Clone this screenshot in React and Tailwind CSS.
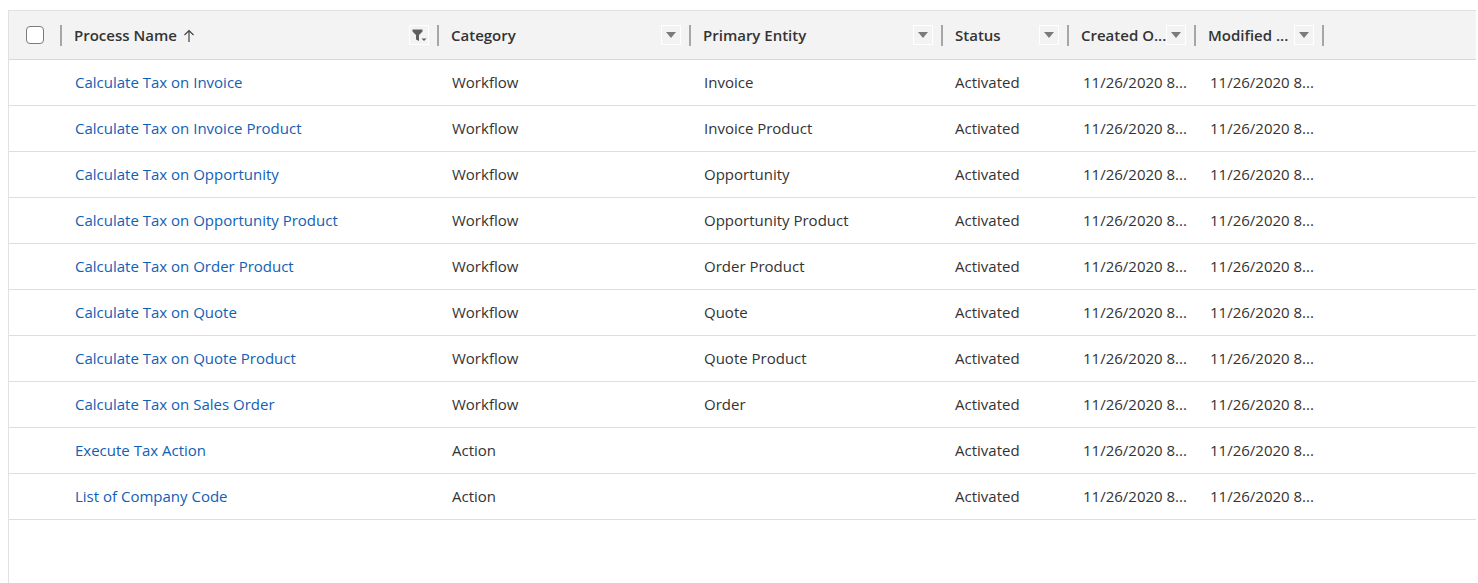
import { useState } from 'react'

// Colonne della griglia: larghezza in px misurata dal separatore al separatore successivo.
const COLONNE = [
  { chiave: 'nome', titolo: 'Process Name', larghezza: 'w-[377px]', ordinata: true, filtro: true },
  { chiave: 'categoria', titolo: 'Category', larghezza: 'w-[252px]' },
  { chiave: 'entita', titolo: 'Primary Entity', larghezza: 'w-[252px]' },
  { chiave: 'stato', titolo: 'Status', larghezza: 'w-[126px]' },
  { chiave: 'creato', titolo: 'Created O...', larghezza: 'w-[127px]' },
  { chiave: 'modificato', titolo: 'Modified ...', larghezza: 'w-[128px]' },
]

const DATA = '11/26/2020 8...'

const RIGHE = [
  ['Calculate Tax on Invoice', 'Workflow', 'Invoice'],
  ['Calculate Tax on Invoice Product', 'Workflow', 'Invoice Product'],
  ['Calculate Tax on Opportunity', 'Workflow', 'Opportunity'],
  ['Calculate Tax on Opportunity Product', 'Workflow', 'Opportunity Product'],
  ['Calculate Tax on Order Product', 'Workflow', 'Order Product'],
  ['Calculate Tax on Quote', 'Workflow', 'Quote'],
  ['Calculate Tax on Quote Product', 'Workflow', 'Quote Product'],
  ['Calculate Tax on Sales Order', 'Workflow', 'Order'],
  ['Execute Tax Action', 'Action', ''],
  ['List of Company Code', 'Action', ''],
]

function Separatore() {
  return <span className="w-[2px] h-[21px] bg-[#a6a6a6] shrink-0" />
}

function BottoneMenu({ filtro }) {
  return (
    <span className="w-[20px] h-[20px] border border-white flex items-center justify-center shrink-0">
      {filtro ? (
        <svg viewBox="0 0 16 16" width="16" height="16">
          <path d="M1.5 2.5h10v2l-3.5 3.5v6l-3-1.5V8L1.5 4.5z" fill="#5f5f5f" />
          <path d="M10.5 11.5h5l-2.5 2.5z" fill="#5f5f5f" />
        </svg>
      ) : (
        <svg viewBox="0 0 10 6" width="10" height="6">
          <path d="M0 0h10L5 6z" fill="#7a7a7a" />
        </svg>
      )}
    </span>
  )
}

function Intestazione({ col }) {
  return (
    <div className={`${col.larghezza} shrink-0 flex items-center h-full`}>
      <div className="flex-1 min-w-0 flex items-center pl-[12px] pr-[8px]">
        <span className="font-semibold text-[#333] whitespace-nowrap">{col.titolo}</span>
        {col.ordinata && (
          <svg viewBox="0 0 12 14" width="12" height="14" className="ml-[6px] mt-[1px]">
            <path d="M6 13V1.5M1.5 6 6 1.5 10.5 6" fill="none" stroke="#444" strokeWidth="1.2" />
          </svg>
        )}
        <span className="flex-1" />
        <BottoneMenu filtro={col.filtro} />
      </div>
      <Separatore />
    </div>
  )
}

export default function App() {
  const [selezionato, setSelezionato] = useState(false)

  return (
    <div
      className="min-h-[583px] bg-white pt-[10px] pl-[8px] pr-[2px] text-[15px]"
      style={{ fontFamily: '"Segoe UI", "Open Sans", sans-serif' }}
    >
      <div className="border-l border-t border-[#e1e1e1] min-h-[573px]">
        <div className="h-[49px] bg-[#f3f3f3] border-b border-[#d8d8d8] flex items-center">
          <div className="w-[53px] shrink-0 flex items-center h-full">
            <button
              type="button"
              onClick={() => setSelezionato(!selezionato)}
              className="ml-[17px] w-[18px] h-[18px] rounded-[4px] border-[1.5px] border-[#7c7c7c] bg-white"
              aria-label="Select all"
            />
            <span className="flex-1" />
            <Separatore />
          </div>
          {COLONNE.map((c) => (
            <Intestazione key={c.chiave} col={c} />
          ))}
        </div>

        {RIGHE.map(([nome, categoria, entita]) => (
          <div key={nome} className="h-[46px] border-b border-[#dedede] flex items-center text-[#333]">
            <div className="w-[55px] shrink-0" />
            <div className="w-[377px] shrink-0 pl-[11px]">
              <a href="#" className="text-[#1160b7]">{nome}</a>
            </div>
            <div className="w-[252px] shrink-0 pl-[11px]">{categoria}</div>
            <div className="w-[252px] shrink-0 pl-[11px]">{entita}</div>
            <div className="w-[126px] shrink-0 pl-[10px]">Activated</div>
            <div className="w-[127px] shrink-0 pl-[12px] whitespace-nowrap">{DATA}</div>
            <div className="w-[128px] shrink-0 pl-[12px] whitespace-nowrap">{DATA}</div>
          </div>
        ))}
      </div>
    </div>
  )
}
